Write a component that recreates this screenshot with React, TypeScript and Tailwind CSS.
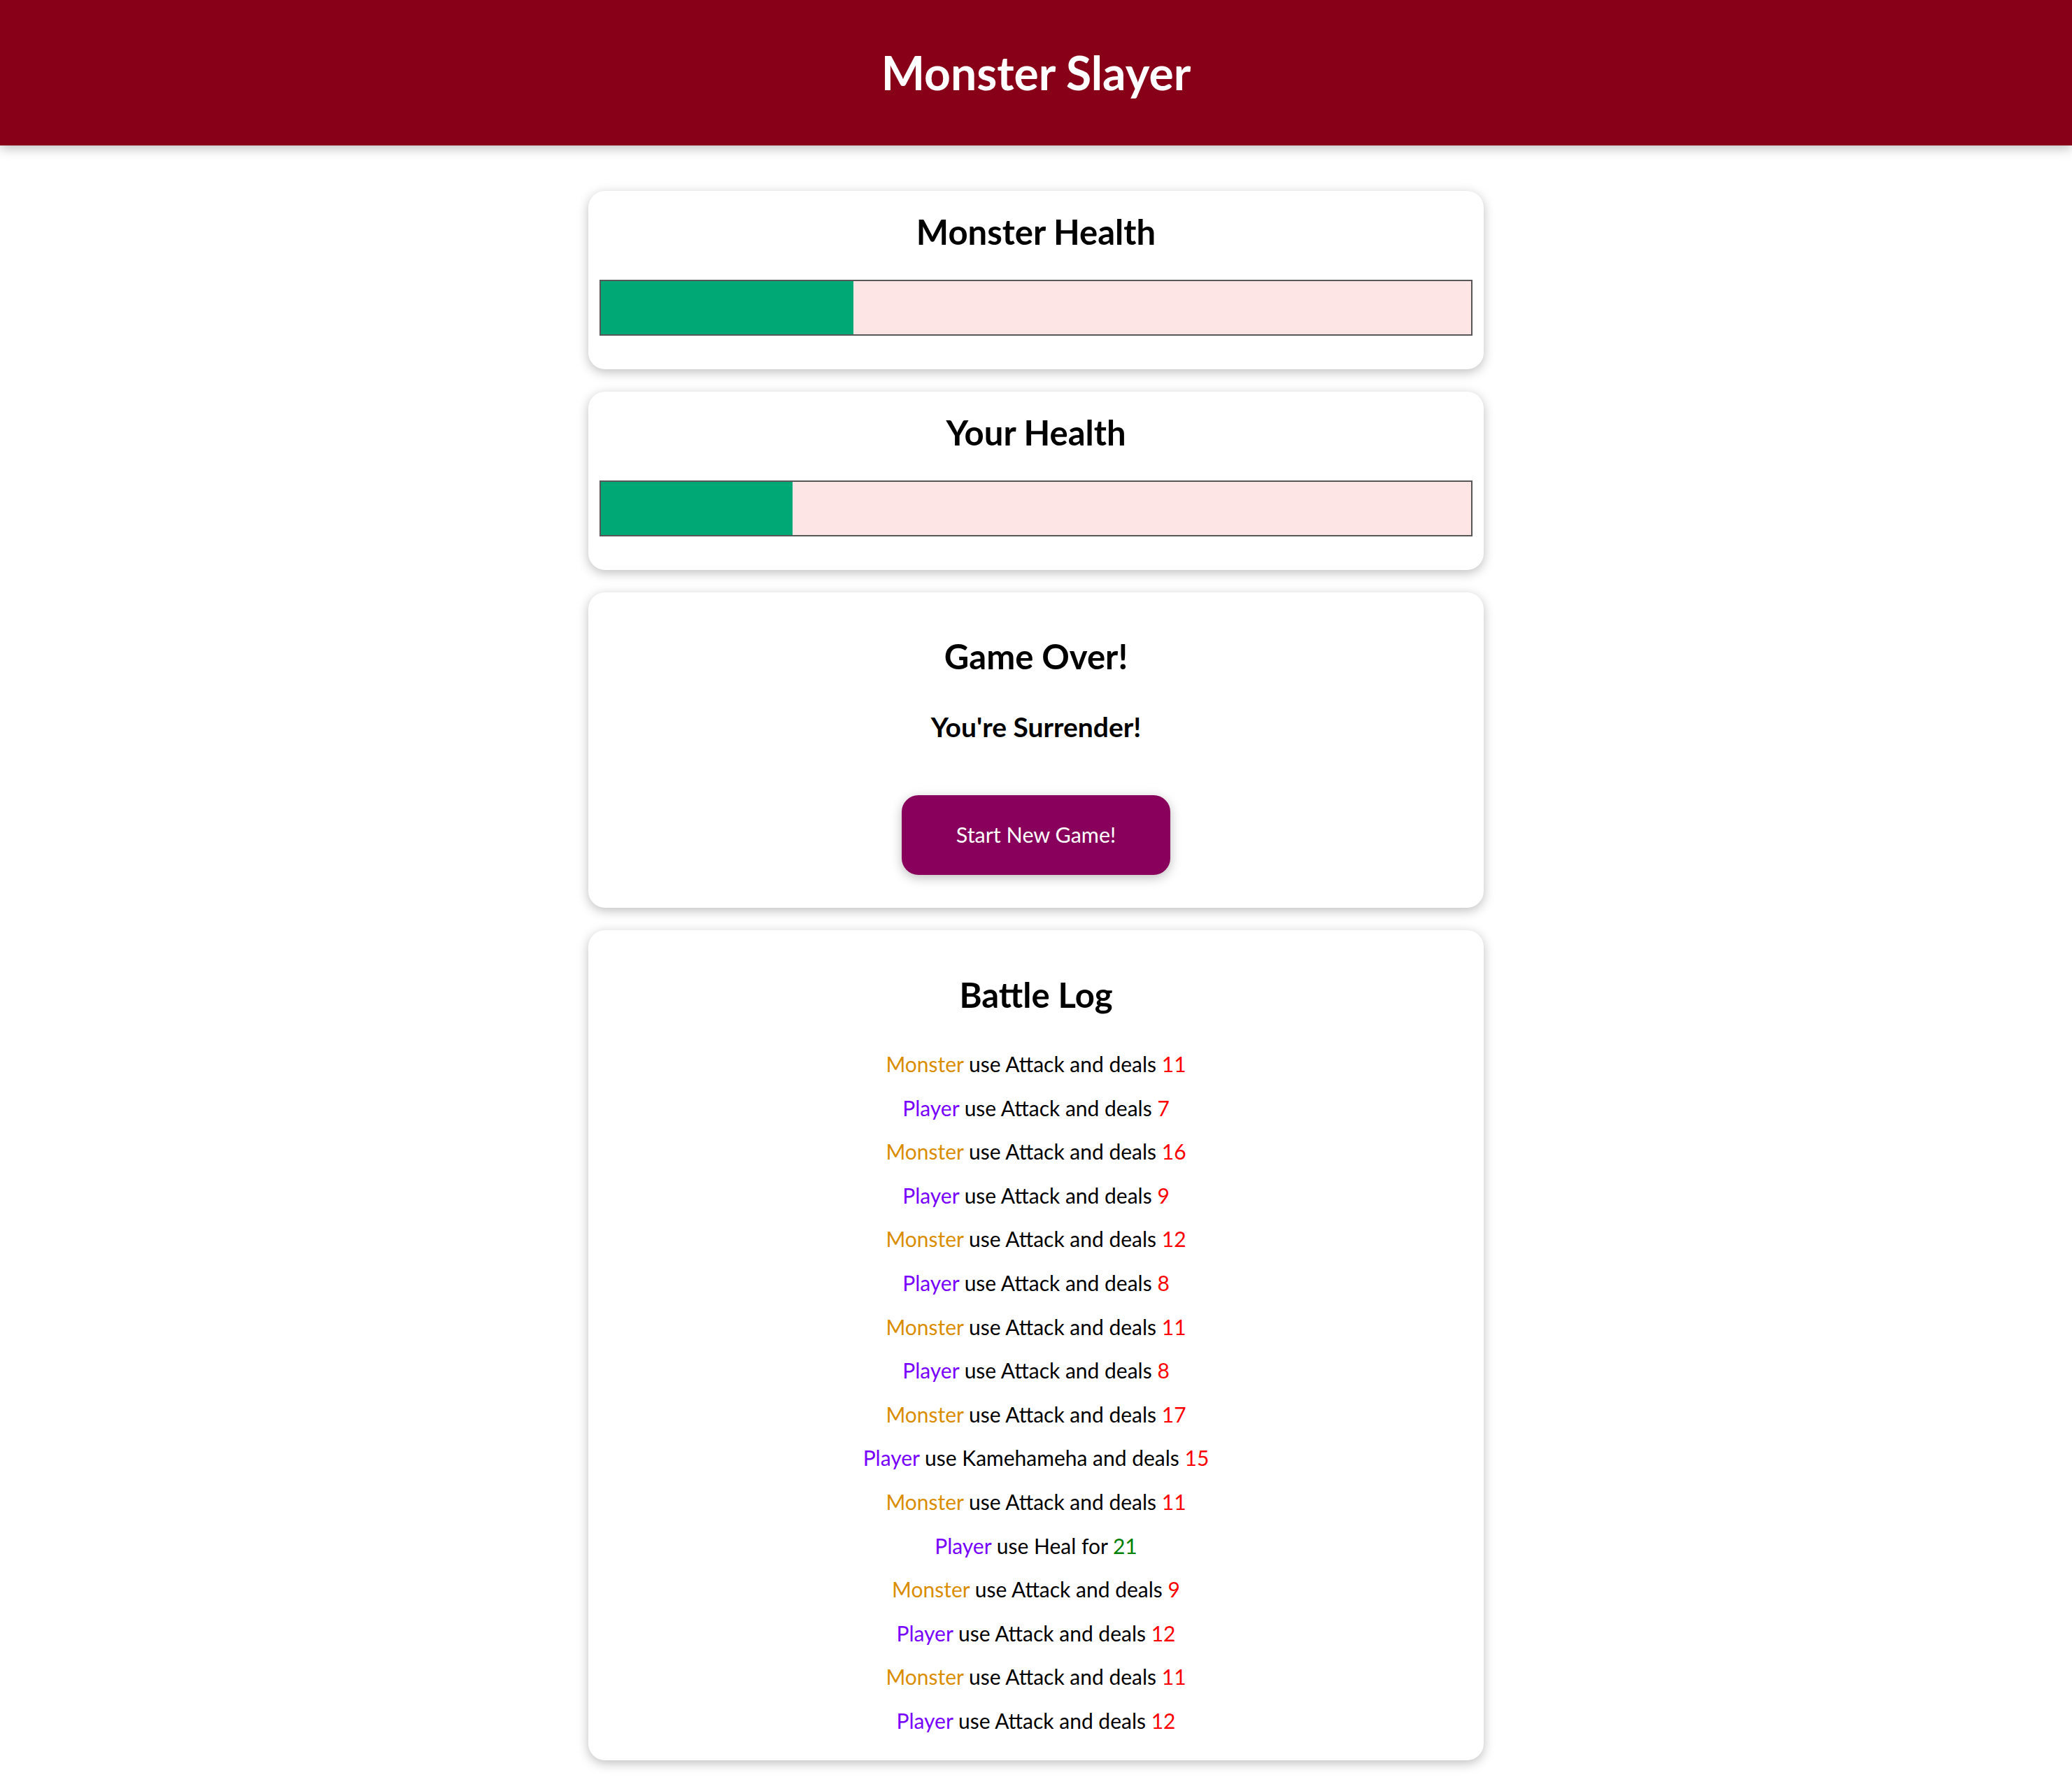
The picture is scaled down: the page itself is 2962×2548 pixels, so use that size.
import React from 'react';

type Entry = {
  who: 'Monster' | 'Player';
  action: string;
  value: number;
  heal?: boolean;
};

const battleLog: Entry[] = [
  { who: 'Monster', action: 'Attack', value: 11 },
  { who: 'Player', action: 'Attack', value: 7 },
  { who: 'Monster', action: 'Attack', value: 16 },
  { who: 'Player', action: 'Attack', value: 9 },
  { who: 'Monster', action: 'Attack', value: 12 },
  { who: 'Player', action: 'Attack', value: 8 },
  { who: 'Monster', action: 'Attack', value: 11 },
  { who: 'Player', action: 'Attack', value: 8 },
  { who: 'Monster', action: 'Attack', value: 17 },
  { who: 'Player', action: 'Kamehameha', value: 15 },
  { who: 'Monster', action: 'Attack', value: 11 },
  { who: 'Player', action: 'Heal', value: 21, heal: true },
  { who: 'Monster', action: 'Attack', value: 9 },
  { who: 'Player', action: 'Attack', value: 12 },
  { who: 'Monster', action: 'Attack', value: 11 },
  { who: 'Player', action: 'Attack', value: 12 },
];

function HealthCard({ title, percent }: { title: string; percent: number }) {
  return (
    <section className="w-[1280px] mx-auto rounded-[24px] bg-white shadow-[0_4px_16px_rgba(0,0,0,0.26)] px-4 pt-[23px] pb-[48px] text-center">
      <h2 className="text-[49px] leading-[70px] font-bold">{title}</h2>
      <div className="mt-[34px] h-[80px] border-2 border-[#575757] bg-[#fde5e5]">
        <div className="h-full bg-[#00a876]" style={{ width: `${percent}%` }} />
      </div>
    </section>
  );
}

export default function App() {
  return (
    <div className="min-h-screen bg-white text-black font-['Lato',sans-serif]">
      <header className="h-[208px] bg-[#880017] flex items-center justify-center shadow-[0_4px_16px_rgba(0,0,0,0.26)]">
        <h1 className="text-[66px] leading-[90px] font-bold text-white">Monster Slayer</h1>
      </header>

      <main className="flex flex-col gap-8 pt-[65px] pb-8">
        <HealthCard title="Monster Health" percent={29} />
        <HealthCard title="Your Health" percent={22} />

        {/* game over */}
        <section className="w-[1280px] mx-auto rounded-[24px] bg-white shadow-[0_4px_16px_rgba(0,0,0,0.26)] px-4 pt-[56px] pb-[47px] flex flex-col items-center">
          <h2 className="text-[49px] leading-[70px] font-bold">Game Over!</h2>
          <h3 className="mt-[41px] text-[39px] leading-[50px] font-bold">You're Surrender!</h3>
          <button className="mt-[73px] w-[384px] h-[114px] rounded-[24px] border-2 border-[#88005b] bg-[#88005b] text-white text-[30.5px] shadow-[0_4px_16px_rgba(0,0,0,0.26)]">
            Start New Game!
          </button>
        </section>

        {/* battle log */}
        <section className="w-[1280px] mx-auto rounded-[24px] bg-white shadow-[0_4px_16px_rgba(0,0,0,0.26)] px-4 pt-[57px] pb-[33px] text-center">
          <h2 className="text-[49px] leading-[70px] font-bold">Battle Log</h2>
          <ul className="mt-[41px] flex flex-col gap-4">
            {battleLog.map((e, i) => (
              <li key={i} className="text-[30px] leading-[46.6px]">
                <span className={e.who === 'Monster' ? 'text-[#da8d00]' : 'text-[#7700ff]'}>{e.who}</span>{' '}
                use {e.action} {e.heal ? 'for' : 'and deals'}{' '}
                <span className={e.heal ? 'text-[#008000]' : 'text-[#ff0000]'}>{e.value}</span>
              </li>
            ))}
          </ul>
        </section>
      </main>
    </div>
  );
}
